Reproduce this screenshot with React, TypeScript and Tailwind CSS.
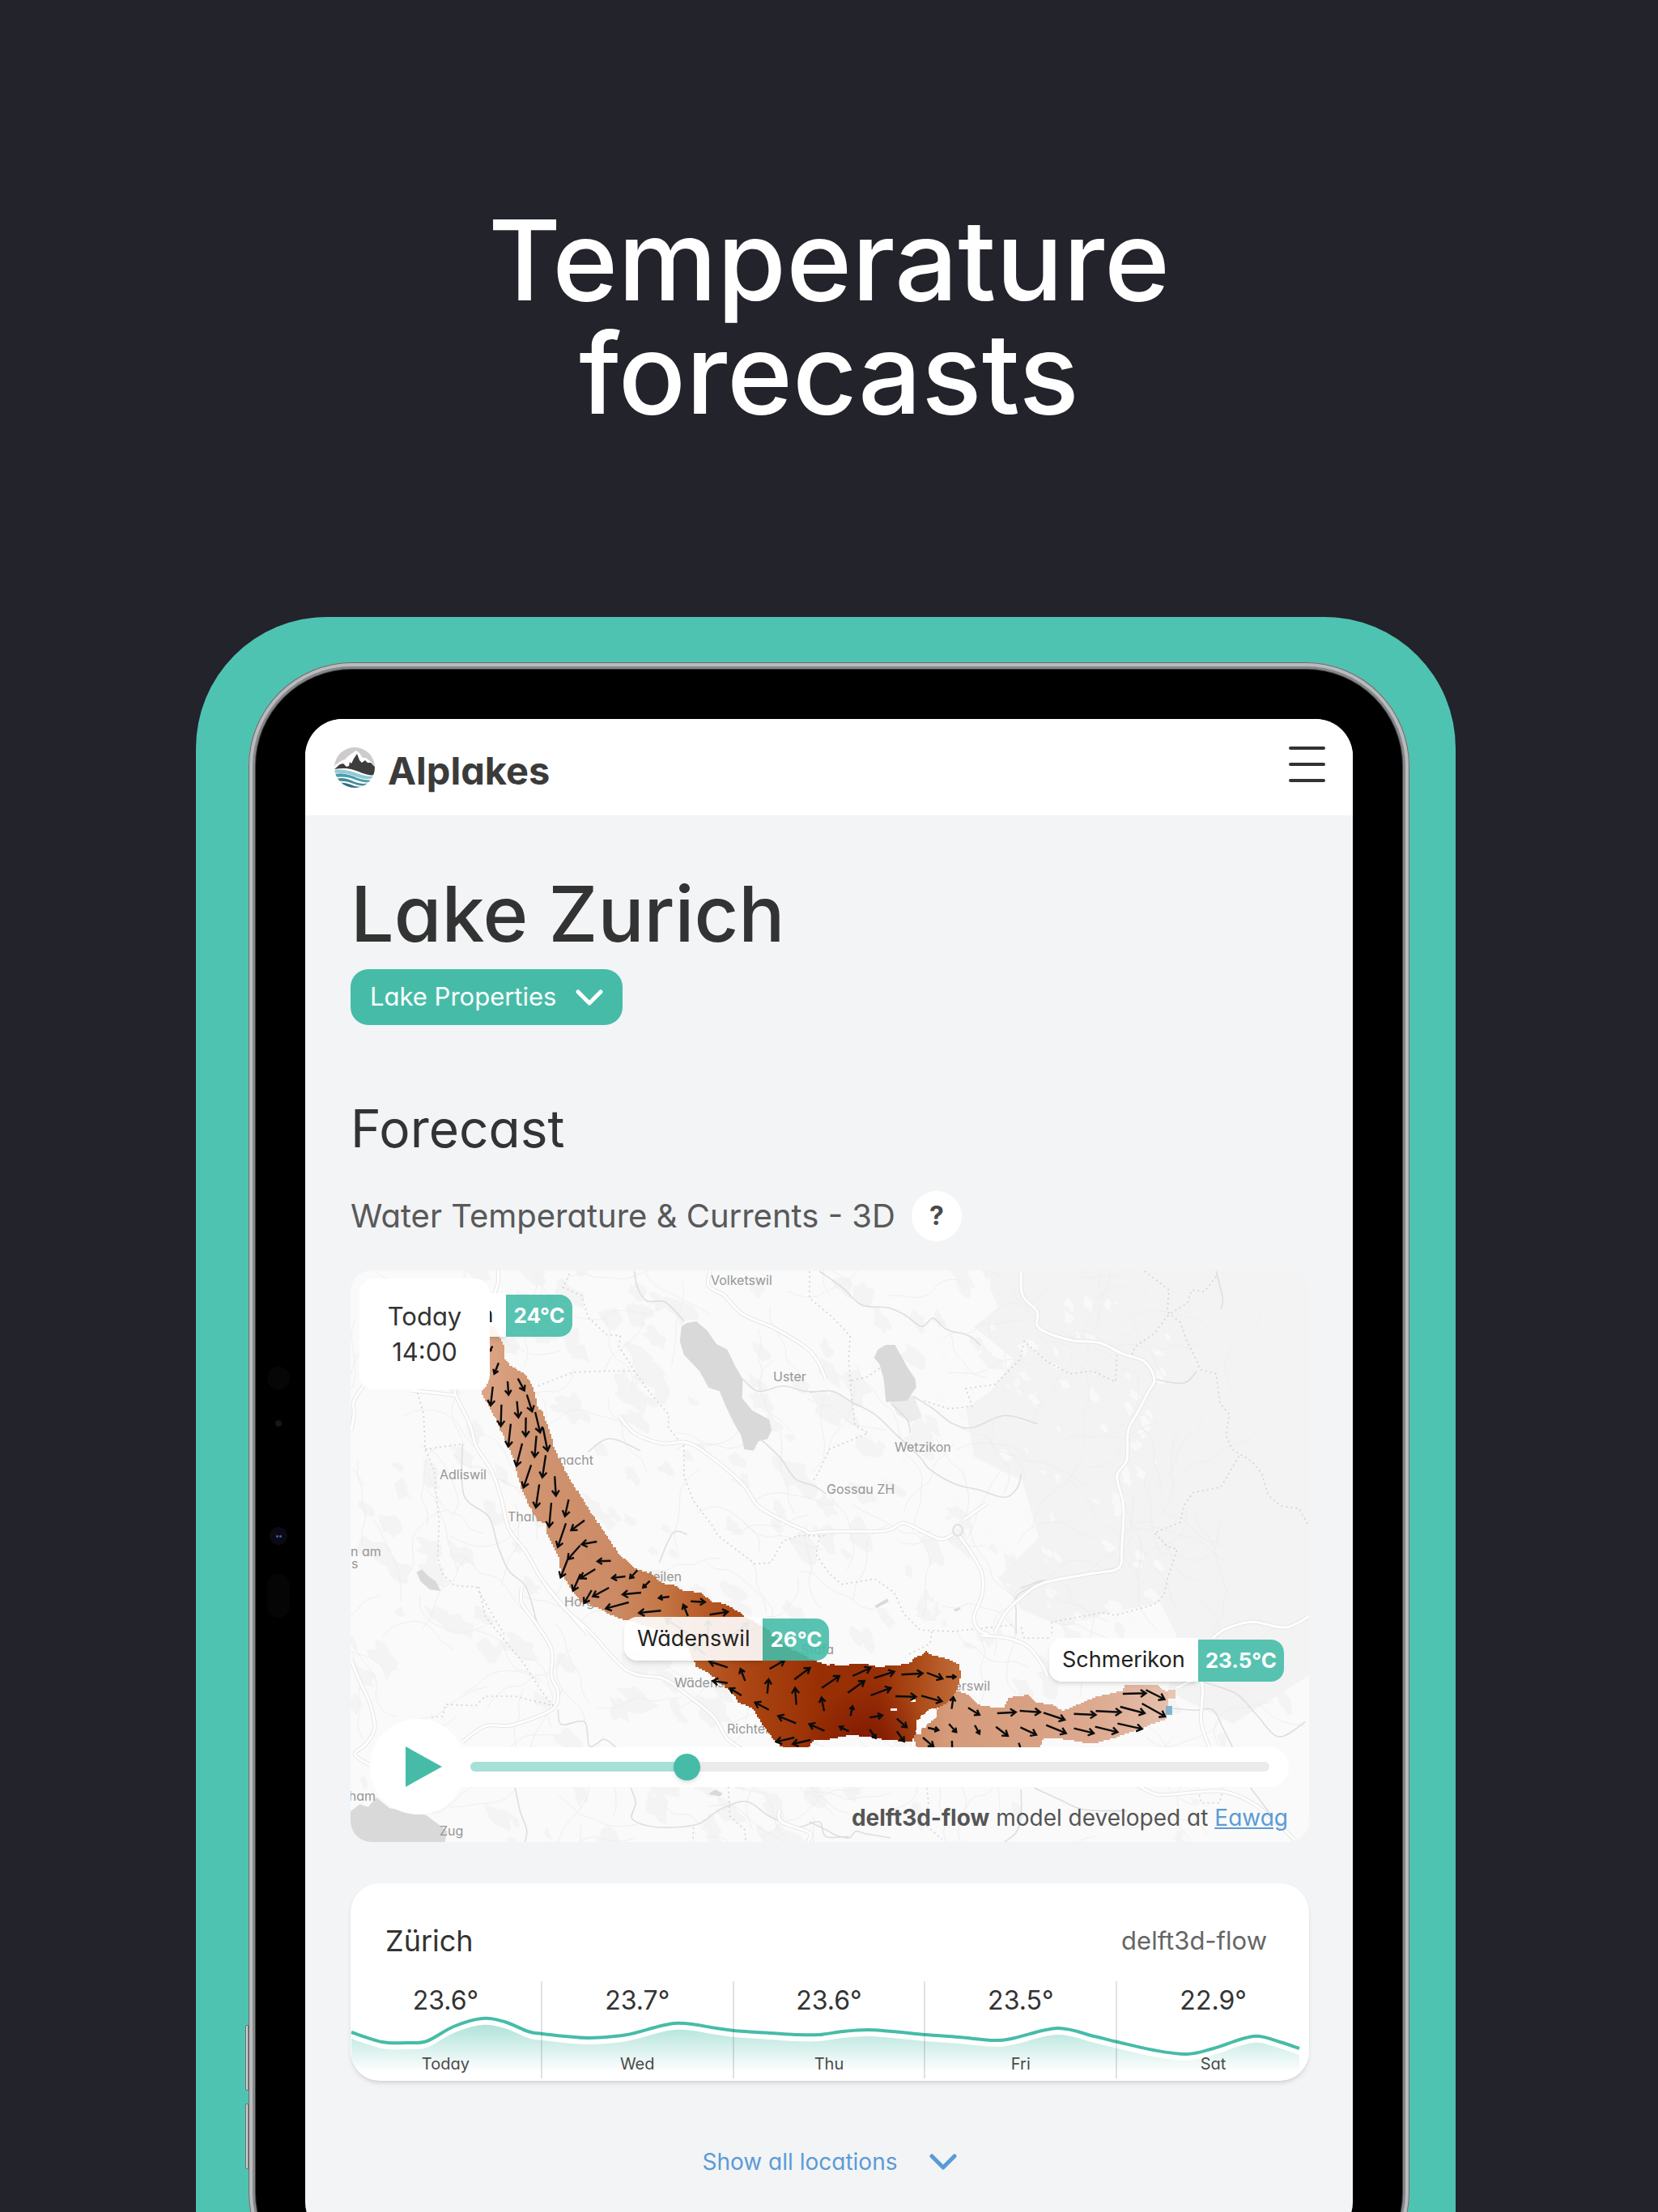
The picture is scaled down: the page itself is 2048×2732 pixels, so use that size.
import { useState } from "react";

type Pt = [number, number];

/* ------------------------------------------------------------------ */
/* Map geometry: four survey tiles projected on one 1184 x 706 canvas  */
/* ------------------------------------------------------------------ */

const tile = (kx: number, ky: number, ox: number, oy: number) => (flat: number[]): Pt[] => {
  const out: Pt[] = [];
  for (let i = 0; i < flat.length; i += 2) out.push([flat[i] / kx + ox, flat[i + 1] / ky + oy]);
  return out;
};
const nw = tile(2.613, 3, -13, -9);
const ne = tile(2.489, 3, 567, -9);
const sw = tile(2.45, 3, -13, 391);
const se = tile(2.45, 3, 567, 391);

const f = (n: number) => n.toFixed(1);

function line(p: Pt[]) {
  return "M" + p.map(([x, y]) => `${f(x)} ${f(y)}`).join("L");
}

/* Catmull-Rom spline through the points */
function smooth(p: Pt[]) {
  let d = `M${f(p[0][0])} ${f(p[0][1])}`;
  for (let i = 0; i < p.length - 1; i++) {
    const a = p[i - 1] ?? p[i];
    const b = p[i];
    const c = p[i + 1];
    const e = p[i + 2] ?? c;
    d += `C${f(b[0] + (c[0] - a[0]) / 6)} ${f(b[1] + (c[1] - a[1]) / 6)} ${f(c[0] - (e[0] - b[0]) / 6)} ${f(
      c[1] - (e[1] - b[1]) / 6,
    )} ${f(c[0])} ${f(c[1])}`;
  }
  return d;
}

/* Model cells are square, so the shore is a staircase */
function stair(p: Pt[], cell = 2) {
  let d = "";
  let prev: Pt | null = null;
  p.forEach((a, i) => {
    const b = p[(i + 1) % p.length];
    const n = Math.max(1, Math.round(Math.hypot(b[0] - a[0], b[1] - a[1]) / cell));
    for (let s = 0; s < n; s++) {
      const x = Math.round((a[0] + ((b[0] - a[0]) * s) / n) / cell) * cell;
      const y = Math.round((a[1] + ((b[1] - a[1]) * s) / n) / cell) * cell;
      if (!prev) d += `M${x} ${y}`;
      else if (prev[0] !== x || prev[1] !== y) d += `H${x}V${y}`;
      prev = [x, y];
    }
  });
  return d + "Z";
}

function arrow([a, b]: Pt[]) {
  const t = Math.atan2(b[1] - a[1], b[0] - a[0]);
  const len = Math.hypot(b[0] - a[0], b[1] - a[1]);
  const h = Math.min(8, len * 0.42);
  const w = (s: number): string => `${f(b[0] - h * Math.cos(t + s))} ${f(b[1] - h * Math.sin(t + s))}`;
  return `M${f(a[0])} ${f(a[1])}L${f(b[0])} ${f(b[1])}M${w(0.6)}L${f(b[0])} ${f(b[1])}L${w(-0.6)}`;
}

function arrows(project: (n: number[]) => Pt[], rows: number[][]) {
  return rows.map((r) => arrow(project(r))).join("");
}

/* Small deterministic generator for woodland and lane texture */
function rng(seed: number) {
  let s = seed;
  return () => {
    s = (s * 1664525 + 1013904223) % 4294967296;
    return s / 4294967296;
  };
}

function woods(seed: number, count: number, x0: number, x1: number, y0: number, y1: number, size: number) {
  const r = rng(seed);
  let d = "";
  for (let i = 0; i < count; i++) {
    const cx = x0 + r() * (x1 - x0);
    const cy = y0 + r() * (y1 - y0);
    const rad = size * (0.25 + r() * 0.75);
    const tilt = 0.5 + r() * 0.8;
    const n = 12;
    const pts: Pt[] = [];
    for (let k = 0; k < n; k++) {
      const a = (k / n) * Math.PI * 2;
      const q = rad * (0.5 + r() * 0.6);
      const u = Math.cos(a) * q;
      const v = Math.sin(a) * q * 0.55;
      pts.push([cx + u * Math.cos(tilt) - v * Math.sin(tilt), cy + u * Math.sin(tilt) + v * Math.cos(tilt)]);
    }
    pts.push(pts[0]);
    d += smooth(pts) + "Z";
  }
  return d;
}

function lanes(seed: number, count: number, x1: number) {
  const r = rng(seed);
  let d = "";
  for (let i = 0; i < count; i++) {
    let x = r() * x1;
    let y = r() * 706;
    let a = r() * Math.PI * 2;
    const pts: Pt[] = [[x, y]];
    for (let k = 0; k < 6; k++) {
      a += (r() - 0.5) * 1.3;
      x += Math.cos(a) * 18;
      y += Math.sin(a) * 18;
      pts.push([x, y]);
    }
    d += smooth(pts);
  }
  return d;
}

const highlands =
  "M780 0L800 45 770 70 820 110 790 150 760 170 770 230 830 260 850 330 800 380 830 420 880 440 930 425 1000 410 1020 450 1010 520 1090 560 1184 500V0Z";
const woodsD = woods(7, 210, 0, 1184, 0, 706, 26) + woods(19, 70, 0, 640, 0, 706, 34);
const clearingsD = woods(31, 110, 640, 1010, 10, 440, 12) + woods(41, 14, 930, 990, 120, 420, 18);
const lanesD = lanes(5, 210, 1100);

const waters = [
  nw([1102, 235, 1120, 222, 1150, 216, 1185, 250, 1215, 300, 1250, 320, 1275, 380, 1300, 430, 1298, 500, 1330, 545, 1385, 580, 1393, 620, 1380, 652, 1350, 660, 1335, 695, 1305, 690, 1295, 640, 1270, 590, 1245, 530, 1225, 475, 1190, 462, 1160, 400, 1110, 340, 1097, 290]),
  nw([247, 1145, 265, 1135, 285, 1160, 310, 1180, 325, 1215, 290, 1210, 260, 1180]),
  ne([210, 320, 235, 303, 262, 303, 280, 340, 300, 385, 325, 430, 328, 460, 300, 510, 235, 515, 228, 430, 215, 375, 198, 350]),
  ne([200, 1270, 240, 1243, 243, 1255, 205, 1278]),
  ne([443, 1284, 464, 1275, 464, 1282, 448, 1292]),
  sw([33, 830, 60, 805, 85, 815, 110, 780, 150, 820, 200, 830, 260, 845, 310, 890, 325, 905, 316, 950, 20, 950, 20, 830]),
  sw([1115, 768, 1135, 750, 1158, 765, 1150, 776]),
].map((p) => line(p) + "Z");

const marsh = line(ne([250, 515, 320, 490, 345, 570, 310, 590, 270, 560])) + "Z";

const roads = [
  nw([370, 470, 375, 495, 420, 600, 440, 680, 490, 770, 520, 870, 545, 985, 600, 1070, 650, 1170, 720, 1270, 800, 1375]),
  nw([75, 455, 45, 510, 45, 560, 36, 620]),
  nw([230, 472, 300, 480, 370, 490]),
  nw([500, 110, 510, 70, 510, 20]),
  nw([1195, 25, 1190, 85, 1240, 120, 1300, 190, 1400, 240, 1500, 310, 1540, 360, 1568, 430]),
  [
    ...nw([900, 565, 950, 630, 1040, 668, 1120, 665, 1200, 720, 1300, 820, 1350, 900, 1440, 960, 1500, 990]),
    ...ne([0, 1000, 60, 995, 230, 992, 280, 965, 310, 972, 400, 1022, 440, 1005]),
  ],
  ne([460, 1010, 500, 1080, 530, 1150, 530, 1230, 505, 1310, 520, 1360, 550, 1375]),
  ne([475, 950, 545, 890]),
  ne([650, 30, 655, 120, 700, 180, 705, 240, 800, 285, 890, 295, 960, 335, 1030, 365, 1060, 430, 1040, 480, 1010, 550, 980, 620, 975, 730, 945, 790, 965, 900, 960, 1050, 950, 1130, 870, 1150, 720, 1185, 650, 1240, 600, 1300, 570, 1370]),
  sw([33, 270, 60, 350, 90, 430, 105, 520, 80, 580, 45, 620, 90, 660]),
  sw([625, 0, 680, 80, 760, 170, 870, 310, 980, 340, 1050, 400, 1130, 480, 1170, 560, 1215, 600]),
  sw([370, 575, 440, 515, 520, 512, 640, 455, 660, 390, 640, 330, 640, 230, 590, 130, 550, 60, 550, 0]),
  sw([1330, 825, 1335, 870, 1420, 910, 1415, 945]),
  se([520, 180, 600, 190, 660, 220, 700, 280, 720, 330]),
  se([1108, 375, 1185, 350, 1185, 500, 1210, 594]),
  se([1220, 190, 1260, 155, 1340, 130, 1440, 150, 1510, 110]),
  se([1000, 740, 1060, 770, 1190, 758, 1260, 760, 1340, 800, 1420, 880, 1470, 940]),
]
  .map(smooth)
  .join("");

const streams = [
  nw([950, 30, 960, 90, 990, 140, 1050, 145, 1110, 215]),
  nw([800, 700, 870, 650, 970, 695]),
  nw([1300, 430, 1350, 475, 1430, 455, 1500, 475, 1568, 475]),
  nw([1360, 655, 1420, 720, 1470, 800, 1530, 825, 1568, 855]),
  nw([395, 670, 400, 860, 480, 940, 510, 1050, 545, 1140, 600, 1200, 635, 1330]),
  nw([1030, 1110, 1075, 1000, 1120, 1005]),
  ne([30, 30, 100, 90, 160, 155, 240, 165, 290, 190, 345, 235, 380, 205, 420, 245, 490, 270, 525, 305]),
  ne([0, 480, 70, 475, 130, 515, 200, 560, 270, 640, 340, 720, 370, 765, 450, 820, 520, 840, 600, 868, 640, 830, 650, 780]),
  ne([320, 495, 380, 540, 440, 595, 500, 610, 600, 565, 700, 595]),
  ne([250, 520, 300, 580, 310, 630]),
  ne([1060, 430, 1150, 445, 1190, 400]),
  ne([1250, 30, 1270, 130, 1265, 170]),
  ne([650, 1205, 720, 1175, 640, 1230, 635, 1290, 635, 1375]),
  sw([660, 455, 670, 510, 740, 500, 755, 590, 800, 565, 840, 600]),
  sw([880, 745, 895, 800, 885, 860, 960, 890, 1080, 880, 1150, 825, 1230, 795, 1300, 850, 1380, 890, 1450, 870, 1470, 925, 1540, 925]),
  sw([530, 745, 545, 830, 565, 900, 560, 945]),
  se([1100, 450, 1170, 457, 1220, 455, 1250, 520, 1280, 594]),
  se([1185, 350, 1290, 395, 1350, 470, 1420, 555, 1500, 500]),
  se([640, 750, 640, 850, 625, 910, 590, 945]),
  se([680, 745, 760, 790, 830, 825, 960, 830]),
  se([1335, 745, 1400, 850]),
  se([0, 870, 50, 900, 80, 920, 120, 930, 140, 905, 170, 915, 200, 920, 245, 930]),
]
  .map(smooth)
  .join("");

const borders = [
  nw([740, 40, 720, 90, 780, 120, 800, 200, 860, 265, 905, 270, 900, 310, 935, 370, 950, 400, 1000, 480, 1060, 560, 1060, 610, 1110, 680, 1110, 790, 1140, 880, 1200, 970, 1220, 1010, 1340, 1115, 1390, 1110, 1430, 1030, 1480, 1010, 1568, 1010]),
  nw([950, 400, 860, 400, 750, 405, 640, 455]),
  nw([250, 480, 270, 560, 275, 690, 305, 770, 310, 850, 320, 960, 315, 1090, 330, 1150, 370, 1195, 440, 1200, 490, 1300, 530, 1375]),
  nw([275, 690, 400, 670]),
  ne([1030, 30, 1105, 100, 1100, 180, 1140, 220, 1160, 290, 1190, 360, 1200, 395, 1250, 410, 1262, 520, 1290, 560, 1280, 640, 1300, 690, 1360, 735, 1390, 780, 1410, 860, 1450, 900, 1505, 910, 1535, 975]),
  ne([1250, 50, 1215, 105, 1175, 100, 1160, 150, 1105, 190, 1060, 260, 1000, 310, 990, 345]),
  ne([945, 340, 940, 440, 870, 400, 800, 410, 730, 365, 660, 290, 645, 360, 570, 450, 480, 465, 500, 530, 430, 540, 350, 510]),
  ne([1320, 715, 1265, 830, 1180, 850, 1150, 900, 1140, 960, 1060, 1000, 1100, 1050, 1130, 1060, 1100, 1170, 1090, 1230, 1060, 1265, 940, 1305, 900, 1295, 745, 1330, 745, 1375]),
  ne([0, 30, 0, 130, 70, 200, 125, 270, 120, 350, 130, 510, 140, 600, 180, 630, 60, 690, 30, 770, 10, 810]),
  ne([130, 435, 180, 420, 215, 390]),
  ne([30, 1010, 20, 1080, 60, 1150, 100, 1190, 200, 1170, 260, 1220, 290, 1300, 340, 1360, 440, 1365, 630, 1340]),
  sw([420, 0, 440, 110, 500, 200, 560, 290, 600, 370, 645, 440, 530, 405, 440, 405, 410, 440, 320, 435, 310, 480, 270, 485]),
  sw([1175, 740, 1180, 850, 1225, 900, 1228, 945]),
  sw([1070, 890, 1068, 945]),
  se([370, 165, 365, 210, 300, 250]),
  se([640, 150, 650, 190, 730, 190]),
  se([355, 745, 360, 800, 350, 880, 400, 935]),
  se([1180, 770, 1185, 800, 1240, 800, 1250, 760]),
]
  .map(line)
  .join("");

const upperBasin = stair([
  ...nw([430, 200, 500, 240, 515, 275, 530, 310, 528, 350, 548, 380, 600, 415, 625, 470, 640, 540, 650, 545, 672, 610, 688, 660, 690, 685, 705, 720, 740, 800, 780, 870, 798, 905, 860, 1010, 900, 1080, 920, 1100, 950, 1130, 1010, 1155, 1035, 1185, 1080, 1195, 1110, 1215, 1160, 1220, 1200, 1255, 1240, 1262, 1300, 1305]),
  ...sw([1285, 150, 1350, 220, 1420, 265, 1470, 290, 1530, 285]),
  ...se([20, 283, 70, 290, 115, 288, 165, 285, 210, 297, 255, 290, 300, 285, 320, 258, 345, 250, 352, 235, 362, 250, 410, 265, 450, 285, 460, 330, 445, 385, 425, 425, 385, 450, 365, 455, 330, 490, 325, 530, 315, 560, 310, 575, 230, 565, 130, 548, 60, 565, 12, 570, -10, 620]),
  ...sw([1365, 620, 1310, 560, 1275, 500, 1250, 450, 1205, 425, 1195, 400, 1130, 330, 1078, 292, 1060, 250, 1050, 210, 990, 170, 920, 140, 865, 122]),
  ...nw([870, 1300, 830, 1275, 780, 1255, 750, 1210, 712, 1140, 705, 1085, 668, 1000, 665, 965, 640, 955, 610, 895, 585, 830, 570, 770, 560, 720, 500, 570, 457, 478, 480, 435, 430, 300]),
]);

const obersee = stair(
  se([445, 385, 480, 400, 515, 440, 585, 450, 600, 410, 660, 400, 680, 425, 740, 440, 765, 460, 800, 440, 870, 405, 945, 385, 955, 362, 1055, 362, 1065, 380, 1085, 390, 1085, 440, 1078, 490, 1015, 520, 950, 550, 870, 578, 810, 575, 800, 565, 710, 562, 690, 610, 340, 610, 320, 580, 315, 545, 345, 515, 385, 480, 385, 450, 410, 430]),
);

const currents =
  arrows(nw, [
    [492, 308, 484, 325], [512, 370, 498, 410], [493, 458, 486, 528], [541, 438, 544, 488], [574, 428, 595, 472],
    [521, 524, 519, 604], [571, 512, 576, 572], [603, 488, 620, 550], [551, 596, 543, 680], [600, 572, 599, 642],
    [630, 552, 646, 628], [588, 668, 569, 752], [634, 640, 628, 718], [655, 610, 670, 696], [617, 748, 592, 832],
    [664, 712, 653, 794], [643, 820, 632, 906], [693, 790, 697, 862], [682, 888, 675, 978], [738, 876, 726, 938],
    [789, 953, 746, 990], [729, 964, 703, 1052], [829, 1032, 780, 1042], [775, 1046, 735, 1098], [734, 1100, 712, 1165],
    [874, 1103, 831, 1105], [824, 1134, 776, 1168], [776, 1152, 752, 1214], [921, 1161, 878, 1167], [812, 1212, 788, 1260],
    [868, 1203, 816, 1235], [972, 1221, 912, 1228], [932, 1257, 858, 1280], [1036, 1288, 965, 1296], [1063, 1236, 1029, 1241],
    [1132, 1253, 1178, 1256], [1123, 1308, 1108, 1266], [1193, 1303, 1252, 1292], [960, 1138, 936, 1168], [1000, 1178, 978, 1202],
  ]) +
  arrows(sw, [
    [1173, 298, 1118, 276], [1226, 348, 1212, 304], [1300, 304, 1345, 272], [1173, 356, 1128, 348], [1293, 395, 1297, 342],
    [1375, 343, 1422, 300], [1215, 402, 1180, 376], [1381, 437, 1377, 374], [1298, 455, 1256, 428], [1380, 505, 1326, 478],
    [1466, 533, 1420, 508], [1375, 558, 1320, 574], [1424, 567, 1370, 582], [1540, 535, 1512, 518],
    [1050, 170, 985, 118], [1112, 190, 1115, 125], [1185, 180, 1235, 135], [1105, 250, 1070, 215],
  ]) +
  arrows(se, [
    [37, 374, 90, 330], [116, 392, 166, 348], [130, 330, 184, 300], [195, 338, 256, 314], [185, 402, 246, 374],
    [278, 325, 342, 320], [355, 318, 402, 340], [413, 333, 442, 333], [260, 405, 322, 407], [338, 403, 400, 424],
    [44, 460, 36, 410], [124, 478, 130, 442], [182, 484, 220, 476], [182, 528, 200, 560], [264, 488, 294, 520],
    [264, 535, 286, 572], [430, 452, 435, 408], [480, 448, 514, 474], [568, 468, 624, 464], [636, 459, 698, 464],
    [708, 466, 772, 492], [800, 470, 866, 474], [866, 460, 942, 464], [940, 444, 1014, 468], [948, 396, 1018, 394],
    [1018, 382, 1074, 416], [1006, 432, 1076, 480], [358, 522, 390, 530], [422, 508, 444, 538], [500, 512, 514, 544],
    [564, 518, 600, 552], [638, 520, 686, 548], [716, 512, 776, 542], [800, 524, 860, 542], [864, 518, 932, 538],
    [932, 506, 1006, 526], [343, 558, 375, 592], [431, 570, 432, 610], [633, 578, 642, 610],
  ]);

const towns: { name: string; x: number; y: number; end?: boolean }[] = [
  { name: "Volketswil", x: 445, y: 18 },
  { name: "Uster", x: 522, y: 137 },
  { name: "Adliswil", x: 110, y: 258 },
  { name: "Thalwil", x: 194, y: 310 },
  { name: "Küsnacht", x: 300, y: 240, end: true },
  { name: "Meilen", x: 409, y: 384, end: true },
  { name: "Horgen", x: 264, y: 415 },
  { name: "n am", x: 0, y: 353 },
  { name: "s", x: 1, y: 368 },
  { name: "Wädenswil", x: 400, y: 515 },
  { name: "Stäfa", x: 597, y: 474, end: true },
  { name: "Richterswil", x: 465, y: 572 },
  { name: "ham", x: 31, y: 655, end: true },
  { name: "Zug", x: 110, y: 698 },
  { name: "Rapperswil", x: 790, y: 519, end: true },
  { name: "Wetzikon", x: 672, y: 224 },
  { name: "Gossau ZH", x: 588, y: 276 },
];

function LakeMap() {
  return (
    <svg viewBox="0 0 1184 706" preserveAspectRatio="xMidYMid slice" className="block size-full" aria-hidden="true">
      <defs>
        <linearGradient id="upper" gradientUnits="userSpaceOnUse" x1="160" y1="0" x2="760" y2="0">
          <stop offset="0" stopColor="#dda788" />
          <stop offset=".1" stopColor="#d19572" />
          <stop offset=".28" stopColor="#cb8a64" />
          <stop offset=".37" stopColor="#c57848" />
          <stop offset=".46" stopColor="#b85b27" />
          <stop offset=".56" stopColor="#aa4412" />
          <stop offset=".7" stopColor="#982f04" />
          <stop offset=".82" stopColor="#982f06" />
          <stop offset=".9" stopColor="#ab4a17" />
          <stop offset="1" stopColor="#c4713f" />
        </linearGradient>
        <radialGradient id="warm" gradientUnits="userSpaceOnUse" cx="640" cy="590" r="80">
          <stop offset="0" stopColor="#781300" stopOpacity=".8" />
          <stop offset="1" stopColor="#781300" stopOpacity="0" />
        </radialGradient>
        <linearGradient id="obersee" gradientUnits="userSpaceOnUse" x1="690" y1="0" x2="1010" y2="0">
          <stop offset="0" stopColor="#cb8259" />
          <stop offset=".14" stopColor="#d49a7a" />
          <stop offset=".5" stopColor="#d9a184" />
          <stop offset=".75" stopColor="#deac93" />
          <stop offset="1" stopColor="#e6c0ad" />
        </linearGradient>
      </defs>
      <rect width="1184" height="706" fill="#fafafa" />
      <path d={woodsD} fill="#f4f4f4" />
      <path d={highlands} fill="#f3f3f3" />
      <path d={clearingsD} fill="#f9f9f9" />
      <path d={lanesD} fill="none" stroke="#eeeeee" strokeWidth="1" />
      <path d={marsh} fill="#ececec" />
      {waters.map((d) => (
        <path key={d} d={d} fill="#d9d9d9" />
      ))}
      <path d={streams} fill="none" stroke="#dedede" strokeWidth="1.6" />
      <path d={borders} fill="none" stroke="#d2d2d2" strokeWidth="1.6" strokeDasharray="2 4" />
      <path d={roads} fill="none" stroke="#e6e6e6" strokeWidth="5" />
      <path d={roads} fill="none" stroke="#ffffff" strokeWidth="3" />
      <ellipse cx="750" cy="321" rx="6" ry="7" fill="none" stroke="#e0e0e0" strokeWidth="2" />
      <g fill="#969696" fontFamily='Inter, "Liberation Sans", sans-serif' fontSize="16">
        {towns.map((t) => (
          <text key={t.name} x={t.x} y={t.y} textAnchor={t.end ? "end" : "start"}>
            {t.name}
          </text>
        ))}
      </g>
      <path d={obersee} fill="url(#obersee)" />
      <path d={upperBasin} fill="url(#upper)" />
      <path d={upperBasin} fill="url(#warm)" />
      <path d="M699 555h6v-6h6v-4h6v-4h6v12h-6v6h-6v6h-6v8h-6zM667 541h8v3h-8zM692 530h6v3h-6z" fill="#fafafa" />
      <rect x="1010" y="518" width="9" height="11" fill="#e9c6b4" />
      <rect x="1007" y="538" width="8" height="11" fill="#7fb4d0" />
      <path d={currents} fill="none" stroke="#0c0c0c" strokeWidth="2.4" />
    </svg>
  );
}

/* ------------------------------------------------------------------ */
/* Interface pieces                                                    */
/* ------------------------------------------------------------------ */

function Logo() {
  return (
    <svg viewBox="0 0 50 50" className="size-[50px]" aria-hidden="true">
      <defs>
        <clipPath id="disc">
          <circle cx="25" cy="25" r="25" />
        </clipPath>
      </defs>
      <g clipPath="url(#disc)">
        <rect width="50" height="50" fill="#fff" />
        <path d="M0 0H50V23L44 17 39 13 35 13 31 7 27 4 21 8 17 11 13 15 8 17 2 21 0 24Z" fill="#cfcbca" />
        <path d="M0 27 7 21 11 20 15 24 18 23 19 18 21 20 24 14 28 8 31 16 34 19 38 16 41 19 45 19 50 24V34C42 36 34 31 24 28 15 25 8 26 0 27Z" fill="#3d3d3d" />
        <path d="M0 28C14 26 24 31 34 34 41 36 46 36 50 35V37C42 41 34 39 26 36 17 32 9 31 0 32Z" fill="#8fcbd6" />
        <path d="M0 33C11 31 20 34 29 38 36 40 43 42 49 39V41C41 45 34 43 26 40 17 36 9 36 0 37Z" fill="#4b9dae" />
        <path d="M2 39C12 36 19 40 26 43 32 45 38 46 46 43V46C38 48 31 48 24 45 17 42 10 41 3 42Z" fill="#3f8a9c" />
        <path d="M7 44C14 43 20 46 25 48 30 49 34 49 40 48V50H7Z" fill="#2f6f80" />
      </g>
    </svg>
  );
}

function Chevron() {
  return (
    <svg viewBox="0 0 34 20" className="h-5 w-[34px]" fill="none" stroke="currentColor" strokeWidth="5" strokeLinecap="round" strokeLinejoin="round" aria-hidden="true">
      <path d="M3 3 17 17 31 3" />
    </svg>
  );
}

function MapPin({ name, temp, className }: { name: string; temp: string; className: string }) {
  return (
    <div className={`absolute flex items-end whitespace-nowrap ${className}`}>
      <span className="rounded-l-2xl bg-white/90 px-4 text-[27px] leading-[54px] text-[#222222] shadow-md">{name}</span>
      <span className="rounded-r-2xl bg-[#46bca8]/90 px-[9px] text-[26px] leading-[52px] font-bold text-white">{temp}</span>
    </div>
  );
}

const days = [
  { day: "Today", temp: "23.6°" },
  { day: "Wed", temp: "23.7°" },
  { day: "Thu", temp: "23.6°" },
  { day: "Fri", temp: "23.5°" },
  { day: "Sat", temp: "22.9°" },
];

const series: Pt[] = [
  [1, 63], [39, 75], [68, 76], [94, 74], [127, 56], [162, 46], [190, 50], [219, 62], [237, 65], [292, 70], [341, 66],
  [400, 52], [451, 58], [473, 61], [517, 64], [549, 66], [578, 66], [607, 62], [637, 60], [668, 62], [709, 66],
  [750, 69], [795, 73], [819, 70], [872, 58], [917, 68], [946, 75], [990, 85], [1031, 90], [1064, 83], [1113, 68],
  [1146, 75], [1170, 83],
];

function Sparkline() {
  const area = smooth(series.map(([x, y]) => [x, y + 8] as Pt)) + "V120H1Z";
  return (
    <svg viewBox="0 0 1182 120" preserveAspectRatio="none" className="absolute inset-0 size-full" aria-hidden="true">
      <defs>
        <linearGradient id="fade" gradientUnits="userSpaceOnUse" x1="0" y1="50" x2="0" y2="112">
          <stop offset="0" stopColor="#46bca8" stopOpacity=".45" />
          <stop offset="1" stopColor="#46bca8" stopOpacity="0" />
        </linearGradient>
      </defs>
      <path d={area} fill="url(#fade)" />
      <path d={smooth(series)} fill="none" stroke="#46bca8" strokeWidth="4" />
    </svg>
  );
}

function TimeSlider() {
  const [minute, setMinute] = useState(263);
  const done = `${(minute + 10) / 10}%`;
  return (
    <input
      type="range"
      min={0}
      max={1000}
      value={minute}
      onChange={(e) => setMinute(Number(e.target.value))}
      aria-label="Forecast time"
      style={{ backgroundImage: `linear-gradient(to right, #a7e0d6 ${done}, #ebebeb ${done})` }}
      className="block h-3 w-full cursor-pointer appearance-none rounded-full [&::-webkit-slider-thumb]:size-[33px] [&::-webkit-slider-thumb]:appearance-none [&::-webkit-slider-thumb]:rounded-full [&::-webkit-slider-thumb]:bg-[#46bca8] [&::-webkit-slider-thumb]:shadow-md"
    />
  );
}

function Screen() {
  return (
    <div className="overflow-hidden rounded-[46px] bg-[#f2f4f6] text-[#333333]">
      <header className="flex h-[119px] items-center justify-between bg-white pr-[34px] pl-9">
        <a href="#" className="flex items-center gap-4 text-[47px] leading-[60px] font-bold text-[#3b3b3b]">
          <Logo />
          <span className="pt-2">Alplakes</span>
        </a>
        <button type="button" aria-label="Menu" className="flex w-[45px] flex-col gap-4 pb-2">
          <span className="h-1 rounded-xs bg-[#333333]" />
          <span className="h-1 rounded-xs bg-[#333333]" />
          <span className="h-1 rounded-xs bg-[#333333]" />
        </button>
      </header>

      <div className="pt-[66px] pr-[54px] pb-[76px] pl-14">
        <h1 className="text-[95px] leading-[112px] font-medium">Lake Zurich</h1>
        <button
          type="button"
          className="mt-3 flex h-[69px] items-center gap-6 rounded-[22px] bg-[#46bca8] px-6 text-[31px] text-white"
        >
          Lake Properties
          <Chevron />
        </button>

        <h2 className="mt-[91px] text-[64px] leading-[74px]">Forecast</h2>
        <div className="mt-10 flex items-center gap-5">
          <h3 className="text-[40px] leading-[60px] text-[#595959]">Water Temperature &amp; Currents - 3D</h3>
          <button
            type="button"
            aria-label="About this forecast"
            className="size-[62px] rounded-full bg-white text-[32px] font-bold text-[#4a4a4a]"
          >
            ?
          </button>
        </div>

        <section aria-label="Lake map" className="relative mt-9 aspect-[1184/706] overflow-hidden rounded-[26px]">
          <LakeMap />
          <MapPin name="Zürich" temp="24°C" className="top-7 left-[79px]" />
          <MapPin name="Wädenswil" temp="26°C" className="top-[428px] left-[338px]" />
          <MapPin name="Schmerikon" temp="23.5°C" className="top-[454px] right-[31px]" />
          <div className="absolute top-[10px] left-[11px] flex h-[137px] w-[161px] flex-col items-center justify-center rounded-[18px] bg-white text-[31px] leading-[44px]">
            <span>Today</span>
            <span>14:00</span>
          </div>
          <div className="absolute right-[25px] bottom-[34px] left-6 flex items-center">
            <button
              type="button"
              aria-label="Play"
              className="z-10 flex size-[118px] shrink-0 items-center justify-center rounded-full bg-white text-[#46bca8]"
            >
              <svg viewBox="0 0 46 50" className="ml-4 h-[50px] w-[46px]" fill="currentColor" aria-hidden="true">
                <path d="M0 0 45 25 0 50Z" />
              </svg>
            </button>
            <div className="-ml-14 flex h-[49px] flex-1 items-center rounded-r-3xl bg-white pr-6 pl-[62px]">
              <TimeSlider />
            </div>
          </div>
          <p className="absolute right-[26px] bottom-2.5 text-[28px] leading-10 text-[#555555]">
            <strong>delft3d-flow</strong> model developed at{" "}
            <a href="#" className="text-[#5b9bd5] underline">
              Eawag
            </a>
          </p>
        </section>

        <section aria-label="Zürich forecast" className="mt-[51px] overflow-hidden rounded-[36px] bg-white pb-[3px] shadow-md">
          <div className="flex h-[121px] items-center justify-between pt-6 pr-[52px] pb-1 pl-[43px]">
            <h4 className="text-[36px] leading-10">Zürich</h4>
            <span className="text-[31px] leading-10 text-[#666666]">delft3d-flow</span>
          </div>
          <div className="relative">
            <Sparkline />
            <ol className="relative grid grid-cols-5 divide-x-2 divide-[#333333]/15">
              {days.map((d) => (
                <li key={d.day} className="flex h-[120px] flex-col items-center justify-between pt-1">
                  <span className="text-[32px] leading-10">{d.temp}</span>
                  <span className="text-[20px] leading-9 text-[#4a4a4a]">{d.day}</span>
                </li>
              ))}
            </ol>
          </div>
        </section>

        <button type="button" className="mx-auto mt-20 flex items-center gap-10 text-[28px] leading-10 text-[#5b9bd5]">
          Show all locations
          <Chevron />
        </button>
      </div>
    </div>
  );
}

function Tablet() {
  return (
    <div className="relative rounded-[128px] bg-[#7e8083] p-[9px] shadow-[inset_0_0_0_1px_#6b6d6f,inset_0_0_0_5px_#b9bbbd,inset_0_0_0_8px_#85878a]">
      <div className="absolute top-[1683px] -left-1 h-[81px] w-1 rounded-l-xs border border-[#6b6d6f] bg-[#d0d2d4]" />
      <div className="absolute top-[1780px] -left-1 h-[81px] w-1 rounded-l-xs border border-[#6b6d6f] bg-[#d0d2d4]" />
      <div className="relative rounded-[119px] bg-black p-[61px] shadow-[0_0_0_1px_#3a3b3c]">
        <div className="absolute top-[861px] left-[14px] flex flex-col items-center">
          <div className="size-7 rounded-full bg-[#060606]" />
          <div className="mt-[38px] size-2 rounded-full bg-[#161616]" />
          <div className="mt-[124px] flex size-[22px] items-center justify-center gap-px rounded-full bg-[#0b0a14]">
            <span className="size-[3px] rounded-full bg-[#3f63b8]" />
            <span className="size-[3px] rounded-full bg-[#3f63b8]" />
          </div>
          <div className="mt-9 h-[54px] w-7 rounded-full bg-[#050505]" />
        </div>
        <Screen />
      </div>
    </div>
  );
}

export default function App() {
  return (
    <main className="h-screen overflow-hidden bg-[#22232b] pt-[251px] font-['Inter','Liberation_Sans',sans-serif]">
      <h1 className="text-center text-[138px] leading-[140px] font-medium text-white">
        Temperature
        <br />
        forecasts
      </h1>
      <div className="mt-[231px] mr-[250px] ml-[242px] rounded-[162px] bg-[#4fc3b1] pt-14 pr-[57px] pb-14 pl-[65px]">
        <div className="[font-feature-settings:'cv11']">
          <Tablet />
        </div>
      </div>
    </main>
  );
}
